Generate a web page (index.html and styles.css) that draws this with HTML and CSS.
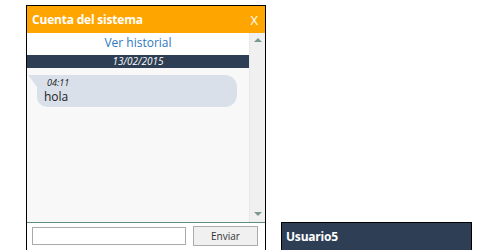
FILE: index.html
```html
<!DOCTYPE html>
<html lang="es">
<head>
<meta charset="utf-8">
<link rel="stylesheet" href="styles.css">
</head>
<body>
<div class="page">
  <div class="chat">
    <div class="chat-head">
      <span class="chat-title">Cuenta del sistema</span>
      <span class="chat-close">X</span>
    </div>
    <div class="chat-body">
      <div class="messages">
        <div class="history">Ver historial</div>
        <div class="date">13/02/2015</div>
        <div class="bubble">
          <span class="tail"></span>
          <div class="time">04:11</div>
          <div class="text">hola</div>
        </div>
      </div>
      <div class="scrollbar">
        <span class="arrow up"></span>
        <span class="arrow down"></span>
      </div>
    </div>
    <div class="chat-foot">
      <input class="msg-input" type="text">
      <button class="send">Enviar</button>
    </div>
  </div>
  <div class="tab">Usuario5</div>
</div>
</body>
</html>
```
FILE: styles.css
```css
* { box-sizing: border-box; }
html, body { margin: 0; padding: 0; background: #fff; overflow: hidden; }
body { font-family: "Open Sans", "DejaVu Sans", sans-serif; width: 486px; height: 250px; }
.page { display: flex; align-items: flex-start; height: 250px; overflow: hidden; }
.chat {
  margin: 5px 0 0 26px;
  width: 240px;
  border: 1px solid #000;
  background: #fff;
  display: flex;
  flex-direction: column;
}
.chat-head {
  height: 27px;
  background: #ffa500;
  color: #fff;
  display: flex;
  align-items: center;
  justify-content: space-between;
  padding: 0 7px 0 5px;
  font-weight: bold;
  font-size: 12px;
}
.chat-title { letter-spacing: -0.2px; }
.chat-close { font-weight: normal; font-size: 13px; }
.chat-body {
  height: 190px;
  display: flex;
  border-bottom: 1px solid #5d8f80;
}
.messages {
  width: 222px;
  background: #f8f8f8;
  display: flex;
  flex-direction: column;
}
.history {
  height: 22px;
  display: flex;
  align-items: center;
  justify-content: center;
  color: #2f78c0;
  font-size: 12px;
  background: #fff;
  padding-bottom: 3px;
}
.date {
  height: 13px;
  background: #2e3f55;
  color: #fff;
  font-style: italic;
  font-size: 10px;
  line-height: 13px;
  text-align: center;
}
.bubble {
  position: relative;
  margin: 7px 0 0 10px;
  width: 200px;
  height: 32px;
  background: #d9e0ea;
  border-radius: 0 12px 12px 10px;
  padding: 3px 0 0 7px;
}
.tail {
  position: absolute;
  left: -9px;
  top: 0;
  width: 0;
  height: 0;
  border-top: 12px solid #d9e0ea;
  border-left: 9px solid transparent;
}
.time { font-size: 9px; font-style: italic; line-height: 10px; color: #222; padding-left: 3px; }
.text { font-size: 12px; line-height: 17px; color: #222; }
.scrollbar {
  width: 16px;
  background: #f0f0f0;
  border-left: 1px dotted #e0e0e0;
  display: flex;
  flex-direction: column;
  justify-content: space-between;
  align-items: center;
  padding: 5px 0 6px;
}
.arrow { width: 0; height: 0; border-left: 4px solid transparent; border-right: 4px solid transparent; }
.arrow.up { border-bottom: 4px solid #7b9a8e; }
.arrow.down { border-top: 4px solid #7b9a8e; }
.chat-foot {
  height: 40px;
  display: flex;
  align-items: flex-start;
  padding: 3px 0 0 5px;
  gap: 7px;
}
.msg-input {
  margin-top: 1px;
  width: 154px;
  height: 18px;
  border: 1px solid #a9a9a9;
  background: #fff;
  padding: 0;
}
.send {
  width: 65px;
  height: 20px;
  border: 1px solid #acacac;
  background: #f0f0f0;
  font-family: "Open Sans", "DejaVu Sans", sans-serif;
  font-size: 10px;
  color: #333;
  padding: 0;
}
.tab {
  margin: 222px 0 0 15px;
  width: 191px;
  height: 28px;
  background: #2e3f55;
  border: 1px solid #000;
  border-bottom: 0;
  color: #fff;
  font-weight: bold;
  font-size: 12px;
  padding: 5px 0 0 4px;
  letter-spacing: -0.2px;
}
```
